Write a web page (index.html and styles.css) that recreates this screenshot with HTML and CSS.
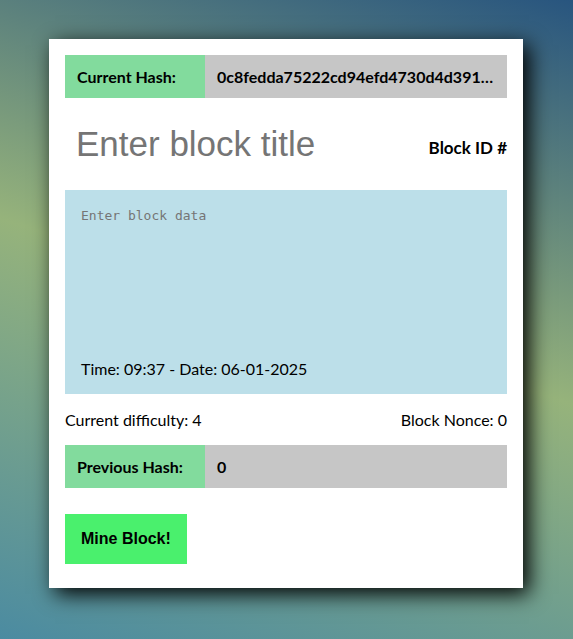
FILE: index.html
```html
<!DOCTYPE html>
<html lang="en">
<head>
<meta charset="utf-8">
<meta name="viewport" content="width=device-width, initial-scale=1">
<title>Block</title>
<link rel="stylesheet" href="styles.css">
</head>
<body>
<main class="block">
  <div class="hash">
    <span class="hash-label">Current Hash:</span>
    <span class="hash-value">0c8fedda75222cd94efd4730d4d391…</span>
  </div>
  <div class="heading">
    <input class="title" type="text" placeholder="Enter block title" aria-label="Block title">
    <strong class="block-id">Block ID #</strong>
  </div>
  <div class="data">
    <textarea class="data-text" placeholder="Enter block data" aria-label="Block data"></textarea>
    <p class="time">Time: 09:37 - Date: 06-01-2025</p>
  </div>
  <div class="stats">
    <span>Current difficulty: 4</span>
    <span>Block Nonce: 0</span>
  </div>
  <div class="hash">
    <span class="hash-label">Previous Hash:</span>
    <span class="hash-value">0</span>
  </div>
  <button class="mine" type="button">Mine Block!</button>
</main>
</body>
</html>
```
FILE: styles.css
```css
* {
  box-sizing: border-box;
}

body {
  margin: 0;
  min-height: 100vh;
  display: flex;
  flex-direction: column;
  padding: 39px 50px 51px 49px;
  font: 16px/19px Lato, sans-serif;
  color: #000;
  background: linear-gradient(198deg, #28557f, #96b37b 49%, #4b8ba1);
}

.block {
  padding: 16px 16px 24px;
  background: #fff;
  box-shadow: 6px 6px 20px #000;
}

.hash {
  display: flex;
  font-weight: 700;
  background: #c6c6c6;
}

.hash-label {
  flex: 0 0 140px;
  padding: 12px;
  background: #82db9d;
}

.hash-value {
  flex: 1;
  min-width: 0;
  padding: 12px;
  overflow: hidden;
  text-overflow: ellipsis;
  white-space: nowrap;
}

.heading {
  display: flex;
  align-items: center;
  justify-content: space-between;
  gap: 16px;
  padding: 24px 0;
}

.title {
  flex: 1;
  min-width: 0;
  border: 0;
  padding: 0 11px;
  height: 44px;
  font: 35px "Liberation Sans", Arial, sans-serif;
  background: transparent;
}

.title::placeholder,
.data-text::placeholder {
  color: #757575;
}

.block-id {
  padding-top: 6px;
  font-size: 17px;
}

.data {
  padding: 16px;
  background: #bcdfe9;
}

.data-text {
  display: block;
  width: 100%;
  height: 153px;
  border: 0;
  padding: 2px 0;
  resize: none;
  font: 13px "DejaVu Sans Mono", monospace;
  background: transparent;
}

.time {
  margin: 0;
}

.stats {
  display: flex;
  justify-content: space-between;
  padding: 16px 0;
}

.mine {
  margin-top: 26px;
  border: 0;
  padding: 16px;
  font: 700 16px/18px "Liberation Sans", Arial, sans-serif;
  color: #000;
  background: #4af06d;
}
```
